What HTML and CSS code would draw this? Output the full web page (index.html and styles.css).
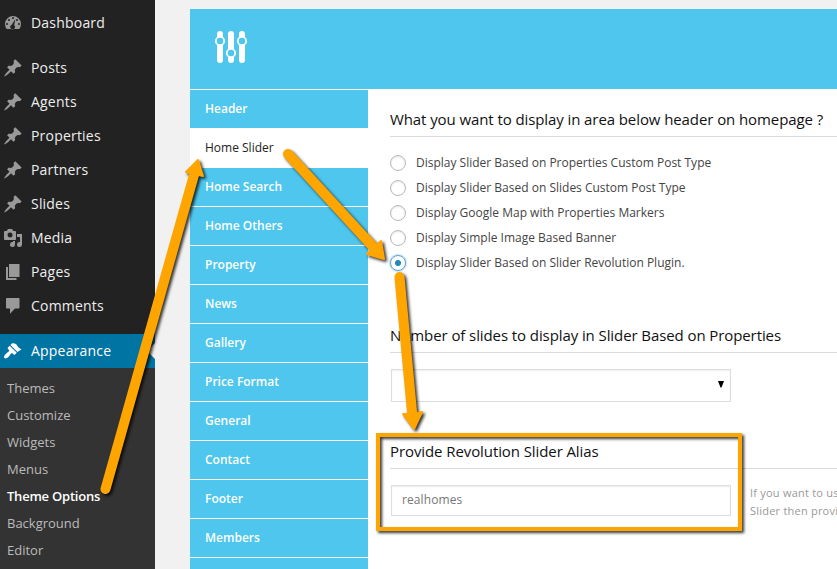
FILE: index.html
```html
<!DOCTYPE html>
<html lang="en">
<head>
<meta charset="utf-8">
<title>Theme Options</title>
<link rel="stylesheet" href="styles.css">
</head>
<body>
<svg class="defs" width="0" height="0">
  <symbol id="pin" viewBox="0 0 20 20"><path d="M10.44 3.02l1.82-1.82 6.36 6.35-1.83 1.82c-1.05-.68-2.48-.57-3.41.36l-.75.75c-.92.93-1.04 2.35-.35 3.41l-1.83 1.82-2.41-2.41-2.8 2.79c-.42.42-3.38 2.71-3.8 2.29s1.86-3.39 2.28-3.81l2.79-2.79L4.1 9.36l1.83-1.82c1.05.69 2.48.57 3.4-.36l.75-.75c.93-.92 1.05-2.35.36-3.41z"/></symbol>
</svg>
<div class="app">
  <aside class="sidebar">
    <ul class="menu">
      <li class="item"><svg class="icon" viewBox="0 0 20 20"><path fill-rule="evenodd" d="M3.76 16h12.48A8 8 0 1 0 3.76 16zM10 4a1 1 0 1 1 0 2 1 1 0 0 1 0-2zM6 6a1 1 0 1 1 0 2 1 1 0 0 1 0-2zm8 0a1 1 0 1 1 0 2 1 1 0 0 1 0-2zm-1.600-.1l-1.300 6.300a2.300 2.300 0 1 1-2.500-.3zM4 10a1 1 0 1 1 0 2 1 1 0 0 1 0-2zm12 0a1 1 0 1 1 0 2 1 1 0 0 1 0-2z"/></svg>Dashboard</li>
      <li class="item spaced"><svg class="icon"><use href="#pin"/></svg>Posts</li>
      <li class="item"><svg class="icon"><use href="#pin"/></svg>Agents</li>
      <li class="item"><svg class="icon"><use href="#pin"/></svg>Properties</li>
      <li class="item"><svg class="icon"><use href="#pin"/></svg>Partners</li>
      <li class="item"><svg class="icon"><use href="#pin"/></svg>Slides</li>
      <li class="item"><svg class="icon" viewBox="0 0 20 20"><path fill-rule="evenodd" d="M13 11V4c0-.55-.45-1-1-1h-1.670L9 1H5L3.670 3H2c-.55 0-1 .45-1 1v7c0 .55.45 1 1 1h10c.55 0 1-.45 1-1zM7 4.500a2.500 2.500 0 1 1 0 5 2.500 2.500 0 0 1 0-5zM14 6h5v10.500a2.500 2.500 0 1 1-2-2.450V9h-3zM10 14.050V13h2v3.500a2.500 2.500 0 1 1-2-2.450z"/></svg>Media</li>
      <li class="item"><svg class="icon" viewBox="0 0 20 20"><path d="M6 15V2h10.500v13zM5 16h8.500v2H3V5h2z"/></svg>Pages</li>
      <li class="item"><svg class="icon" viewBox="0 0 20 20"><path d="M4 2h11.500c.55 0 1 .45 1 1v8.500c0 .55-.45 1-1 1H12l-5 5.300v-5.300H4c-.55 0-1-.45-1-1V3c0-.55.45-1 1-1z"/></svg>Comments</li>
      <li class="item spaced current"><svg class="icon" viewBox="0 0 20 20"><path d="M14.480 11.060L7.410 3.990l1.500-1.500c.5-.56 2.300-.47 3.510.32 1.210.8 1.430 1.280 2 2.100.78 1.140 1.560 2.100 4.200 3.400zM13.770 11.770L6.700 4.700 4.930 6.470c-.39.39-.39 1.020 0 1.410l1.060 1.060c.39.39.39 1.030 0 1.420-.600.600-1.430 1.110-2.210 1.690-.350.260-.7.530-1.010.840C1.430 14.230.4 16.080 1.400 17.070c.99 1 2.840-.03 4.180-1.360.310-.31.580-.66.850-1.020.570-.78 1.080-1.610 1.690-2.210.39-.39 1.020-.39 1.410 0l1.060 1.060c.39.39 1.020.39 1.410 0z"/></svg>Appearance</li>
    </ul>
    <ul class="submenu">
      <li>Themes</li><li>Customize</li><li>Widgets</li><li>Menus</li>
      <li class="active">Theme Options</li><li>Background</li><li>Editor</li>
    </ul>
  </aside>
  <main class="panel">
    <header class="banner">
      <svg width="34" height="34" viewBox="0 0 34 34">
        <g stroke="#fff" stroke-width="6" stroke-linecap="round"><path d="M6 4v26M17 4v26M28 4v26"/></g>
        <g fill="#4ec6ed" stroke="#fff" stroke-width="1.800"><circle cx="6" cy="11" r="4.200"/><circle cx="17" cy="23" r="4.200"/><circle cx="28" cy="11" r="4.200"/></g>
      </svg>
    </header>
    <div class="columns">
      <ul class="tabs">
        <li>Header</li><li class="open">Home Slider</li><li>Home Search</li><li>Home Others</li><li>Property</li><li>News</li><li>Gallery</li><li>Price Format</li><li>General</li><li>Contact</li><li>Footer</li><li>Members</li><li></li>
      </ul>
      <section class="content">
        <div class="group area">
          <h3>What you want to display in area below header on homepage ?</h3>
          <ul class="choices">
            <li><span class="radio"></span>Display Slider Based on Properties Custom Post Type</li>
            <li><span class="radio"></span>Display Slider Based on Slides Custom Post Type</li>
            <li><span class="radio"></span>Display Google Map with Properties Markers</li>
            <li><span class="radio"></span>Display Simple Image Based Banner</li>
            <li><span class="radio on"></span>Display Slider Based on Slider Revolution Plugin.</li>
          </ul>
        </div>
        <div class="group count">
          <h3>Number of slides to display in Slider Based on Properties</h3>
          <div class="field select"><svg width="6" height="7" viewBox="0 0 6 7"><path d="M0 0h6L3.500 6.500h-1z"/></svg></div>
        </div>
        <div class="group">
          <h3>Provide Revolution Slider Alias</h3>
          <div class="row">
            <div class="field">realhomes</div>
            <p class="help">If you want to us<br>Slider then provi</p>
          </div>
        </div>
      </section>
    </div>
  </main>
</div>
<svg class="marks" width="837" height="569" viewBox="0 0 837 569">
  <g fill="#ffa500" stroke="#ffa500" stroke-linecap="round" stroke-linejoin="round">
    <path stroke-width="10" d="M105.500 489L194 175"/>
    <path stroke-width="2" d="M198 160L186 172L203 176z"/>
    <path stroke-width="10" d="M288 154L376 250"/>
    <path stroke-width="2" d="M384 259L381 241L367 254z"/>
    <path stroke-width="10" d="M399.500 277L412 412"/>
    <path stroke-width="2" d="M414 429L403 414L412 414L422 412z"/>
  </g>
  <rect x="378" y="435" width="362" height="94" fill="none" stroke="#ffa500" stroke-width="4"/>
</svg>
</body>
</html>
```
FILE: styles.css
```css
* { box-sizing: border-box; }
body { margin: 0; background: #f1f1f1; font-family: "Open Sans", sans-serif; overflow: hidden; }
ul, h3, p { margin: 0; padding: 0; list-style: none; font-weight: 400; }
.defs { display: none; }
.app { display: flex; width: 837px; height: 569px; overflow: hidden; }
.sidebar { width: 155px; flex: none; background: #222; }
.menu { padding-top: 6px; }
.item { display: flex; align-items: center; height: 34px; padding: 0 0 2px 3px; gap: 8px; color: #eee; font-size: 14px; letter-spacing: .2px; position: relative; }
.spaced { margin-top: 11px; }
.icon { width: 20px; height: 20px; margin-top: 2px; fill: #999; flex: none; }
.current { background: #0074a2; color: #fff; }
.current .icon { fill: #fff; }
.current::after { content: ""; position: absolute; right: 0; top: 9px; border: 8px solid transparent; border-right-color: #f1f1f1; border-left: 0; }
.submenu { height: 201px; padding: 7px 0 0 7px; background: #333; color: #bbb; font-size: 13px; line-height: 27px; }
.submenu .active { color: #fff; font-weight: 600; letter-spacing: -.22px; }
.panel { margin: 9px 0 0 35px; width: 647px; height: 560px; background: #fff; overflow: hidden; }
.banner { height: 80px; padding: 21px 0 0 24px; background: #4ec6ed; }
.columns { display: flex; }
.tabs { width: 178px; flex: none; padding-top: 1px; }
.tabs li { height: 39px; padding-left: 15px; border-bottom: 1px solid #fff; background: #4ec6ed; color: #fff; font-size: 12px; font-weight: 600; line-height: 38px; }
.tabs .open { background: #fff; color: #222; font-weight: 400; }
.content { width: 447px; margin-left: 22px; padding-top: 18px; }
h3 { height: 30px; border-bottom: 1px solid #dadada; color: #111; font-size: 15px; letter-spacing: -.09px; line-height: 25px; white-space: nowrap; }
.area { height: 216px; }
.count { height: 116px; }
.choices { padding-top: 13px; }
.choices li { display: flex; align-items: center; gap: 10px; height: 25px; color: #444; font-size: 12px; white-space: nowrap; }
.radio { width: 16px; height: 16px; border: 1px solid #b4b9be; border-radius: 50%; background: #fff; box-shadow: inset 0 1px 2px rgba(0,0,0,.1); }
.on { border-color: #5b9dd9; background: radial-gradient(circle, #1e8cbe 2.700px, #fff 3.300px); box-shadow: 0 0 2px rgba(30,140,190,.8); }
.field { width: 340px; height: 31px; flex: none; margin: 16px 0 0 1px; padding-left: 10px; border: 1px solid #ddd; box-shadow: inset 0 1px 2px rgba(0,0,0,.07); color: #777; font-size: 12px; letter-spacing: .1px; line-height: 28px; }
.select { display: flex; align-items: center; justify-content: flex-end; height: 33px; padding: 0 6px 2px 0; }
.row { display: flex; }
.help { margin: 15px 0 0 19px; color: #999; font-size: 11px; letter-spacing: .22px; line-height: 18px; white-space: nowrap; }
.marks { position: absolute; left: 0; top: 0; filter: drop-shadow(2px 2px 1.500px rgba(0,0,0,.8)); }
```
